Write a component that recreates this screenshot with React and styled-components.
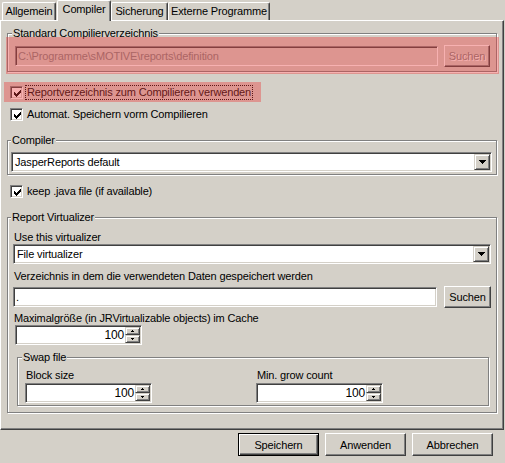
import React from "react";
import styled, { createGlobalStyle } from "styled-components";

const GlobalStyle = createGlobalStyle`
    body {
        margin: 0;
        background: #d4d0c8;
    }
`;

const tabs = [
    { label: "Allgemein", w: 54, ml: 0 },
    { label: "Compiler", w: 54, ml: 1, active: true },
    { label: "Sicherung", w: 57, ml: 0 },
    { label: "Externe Programme", w: 102, ml: 0 },
];

const Check = () => (
    <svg width="7" height="7" viewBox="0 0 7 7" shapeRendering="crispEdges">
        <path
            d="M0 2h1v3h-1z M1 3h1v3h-1z M2 4h1v3h-1z M3 3h1v3h-1z M4 2h1v3h-1z M5 1h1v3h-1z M6 0h1v3h-1z"
            fill="#000"
        />
    </svg>
);

const DownArrow = () => (
    <svg width="7" height="4" viewBox="0 0 7 4" shapeRendering="crispEdges">
        <path d="M0 0h7v1h-7z M1 1h5v1h-5z M2 2h3v1h-3z M3 3h1v1h-1z" fill="#000" />
    </svg>
);

const TinyArrow = ({ up }) => (
    <svg width="5" height="3" viewBox="0 0 5 3" shapeRendering="crispEdges">
        {up ? (
            <path d="M2 0h1v1h-1z M1 1h3v1h-3z" fill="#000" />
        ) : (
            <path d="M1 0h3v1h-3z M2 1h1v1h-1z" fill="#000" />
        )}
    </svg>
);

const CheckBox = ({ label, focused }) => (
    <CheckRow>
        {focused && <Highlight />}
        <Box>
            <Check />
        </Box>
        <CheckText $focused={focused}>{label}</CheckText>
    </CheckRow>
);

const Spinner = ({ value }) => (
    <SpinBox>
        <SpinValue>{value}</SpinValue>
        <SpinButtons>
            <SpinBtn>
                <TinyArrow up />
            </SpinBtn>
            <SpinBtn>
                <TinyArrow />
            </SpinBtn>
        </SpinButtons>
    </SpinBox>
);

const Combo = ({ value }) => (
    <ComboBox>
        <ComboText>{value}</ComboText>
        <DropButton>
            <DownArrow />
        </DropButton>
    </ComboBox>
);

export default function App() {
    return (
        <Window>
            <GlobalStyle />
            <TabStrip>
                {tabs.map(t => (
                    <Tab key={t.label} $w={t.w} $ml={t.ml} $active={t.active}>
                        {t.label}
                    </Tab>
                ))}
            </TabStrip>
            <Panel>
                <Group $mt={12} $pad="11px 6px 4px 7px">
                    <Legend $left={4}>Standard Compilierverzeichnis</Legend>
                    <FieldRow $gap={6}>
                        <Field $disabled>C:\Programme\sMOTIVE\reports\definition</Field>
                        <Button $w={46} $h={22} disabled>
                            Suchen
                        </Button>
                    </FieldRow>
                    <GroupHighlight />
                </Group>

                <CheckSpacer $mt={12} />
                <CheckBox label="Reportverzeichnis zum Compilieren verwenden" focused />
                <CheckSpacer $mt={5} />
                <CheckBox label="Automat. Speichern vorm Compilieren" />

                <Group $mt={17} $pad="11px 4px 2px 3px">
                    <Legend $left={3}>Compiler</Legend>
                    <Combo value="JasperReports default" />
                </Group>

                <CheckSpacer $mt={8} />
                <CheckBox label="keep .java file (if available)" />

                <Group $mt={17} $pad="13px 5px 6px 5px">
                    <Legend $left={3}>Report Virtualizer</Legend>
                    <Label>Use this virtualizer</Label>
                    <Combo value="File virtualizer" />
                    <Label $mt={6}>Verzeichnis in dem die verwendeten Daten gespeichert werden</Label>
                    <FieldRow $gap={7} $mt={3}>
                        <Field>.</Field>
                        <Button $w={47} $h={22}>
                            Suchen
                        </Button>
                    </FieldRow>
                    <Label $mt={4}>Maximalgröße (in JRVirtualizable objects) im Cache</Label>
                    <SpinSlot $ml={2}>
                        <Spinner value="100" />
                    </SpinSlot>

                    <Group $mt={12} $mx="0 2px 0 4px" $pad="11px 0 2px 7px">
                        <Legend $left={4}>Swap file</Legend>
                        <SwapGrid>
                            <div>
                                <Label>Block size</Label>
                                <SpinSlot $mt={1}>
                                    <Spinner value="100" />
                                </SpinSlot>
                            </div>
                            <div>
                                <Label>Min. grow count</Label>
                                <SpinSlot $mt={1}>
                                    <Spinner value="100" />
                                </SpinSlot>
                            </div>
                        </SwapGrid>
                    </Group>
                </Group>
            </Panel>
            <ButtonBar>
                <Button $w={81} $h={23} $default>
                    Speichern
                </Button>
                <Button $w={81} $h={23}>
                    Anwenden
                </Button>
                <Button $w={81} $h={23}>
                    Abbrechen
                </Button>
            </ButtonBar>
        </Window>
    );
}

const Window = styled.div`
    width: 505px;
    height: 463px;
    overflow: hidden;
    background: #d4d0c8;
    color: #000;
    font-family: "Liberation Sans", Arial, sans-serif;
    font-size: 11px;
    letter-spacing: -0.15px;
    display: flex;
    flex-direction: column;
`;

const TabStrip = styled.div`
    height: 20px;
    padding-left: 2px;
    display: flex;
    align-items: flex-end;
    position: relative;
    z-index: 1;
`;

const Tab = styled.div`
    box-sizing: border-box;
    width: ${p => p.$w}px;
    margin-left: ${p => p.$ml}px;
    height: ${p => (p.$active ? 21 : 18)}px;
    margin-bottom: ${p => (p.$active ? -1 : 0)}px;
    padding-bottom: ${p => (p.$active ? 4 : 1)}px;
    display: flex;
    align-items: center;
    justify-content: center;
    white-space: nowrap;
    background: #d4d0c8;
    border-top: 1px solid #fff;
    border-left: 1px solid #fff;
    border-right: 1px solid #404040;
    border-radius: 2px 2px 0 0;
    box-shadow: inset -1px 0 0 #808080;
`;

const Panel = styled.div`
    box-sizing: border-box;
    width: 504px;
    height: 410px;
    padding: 0 6px 0 6px;
    border-top: 1px solid #fff;
    border-left: 1px solid #fff;
    border-right: 1px solid #404040;
    border-bottom: 1px solid #404040;
    box-shadow: inset -1px -1px 0 #808080;
    display: flex;
    flex-direction: column;
`;

const Group = styled.div`
    position: relative;
    margin: ${p => p.$mx || "0"};
    margin-top: ${p => p.$mt || 0}px;
    padding: ${p => p.$pad};
    border: 1px solid #808080;
    box-shadow: inset 1px 1px 0 #fff, 1px 1px 0 #fff;
    display: flex;
    flex-direction: column;
`;

const Legend = styled.span`
    position: absolute;
    top: -7px;
    left: ${p => p.$left}px;
    padding: 0 1px;
    line-height: 13px;
    background: #d4d0c8;
    white-space: nowrap;
`;

const GroupHighlight = styled.div`
    position: absolute;
    top: 3px;
    left: -2px;
    right: -3px;
    bottom: -3px;
    background: rgba(235, 60, 60, 0.4);
    pointer-events: none;
`;

const FieldRow = styled.div`
    display: flex;
    align-items: center;
    gap: ${p => p.$gap}px;
    margin-top: ${p => p.$mt || 0}px;
`;

const sunken = `
    box-sizing: border-box;
    border: 1px solid;
    border-color: #808080 #fff #fff #808080;
    box-shadow: inset 1px 1px 0 #404040, inset -1px -1px 0 #d4d0c8;
`;

const Field = styled.div`
    ${sunken}
    flex: 1;
    height: 20px;
    padding: 0 2px;
    line-height: 18px;
    white-space: nowrap;
    overflow: hidden;
    background: ${p => (p.$disabled ? "#d4d0c8" : "#fff")};
    color: ${p => (p.$disabled ? "#808080" : "#000")};
`;

const Button = styled.button`
    box-sizing: border-box;
    width: ${p => p.$w}px;
    height: ${p => p.$h}px;
    padding: 0;
    font: inherit;
    letter-spacing: inherit;
    color: #000;
    background: #d4d0c8;
    border: 1px solid;
    border-color: ${p => (p.$default ? "#000" : "#fff #404040 #404040 #fff")};
    box-shadow: ${p =>
        p.$default
            ? "inset 1px 1px 0 #fff, inset -1px -1px 0 #404040, inset -2px -2px 0 #808080"
            : "inset -1px -1px 0 #808080"};

    &:disabled {
        color: #808080;
        text-shadow: 1px 1px 0 #fff;
    }
`;

const CheckSpacer = styled.div`
    height: ${p => p.$mt}px;
    flex: none;
`;

const CheckRow = styled.div`
    position: relative;
    height: 17px;
    display: flex;
    align-items: center;
    padding-left: 3px;
`;

const Highlight = styled.div`
    position: absolute;
    top: -2px;
    left: -3px;
    width: 257px;
    height: 20px;
    background: rgba(235, 60, 60, 0.4);
    pointer-events: none;
`;

const Box = styled.div`
    ${sunken}
    width: 13px;
    height: 13px;
    background: #fff;
    display: flex;
    align-items: center;
    justify-content: center;
    padding: 1px 0 0 1px;
`;

const CheckText = styled.span`
    margin-left: 3px;
    padding: 0 1px;
    line-height: 13px;
    white-space: nowrap;
    outline: ${p => (p.$focused ? "1px dotted #000" : "none")};
`;

const ComboBox = styled.div`
    ${sunken}
    height: 20px;
    background: #fff;
    display: flex;
    align-items: center;
    padding: 0 1px 0 3px;
`;

const ComboText = styled.div`
    flex: 1;
    white-space: nowrap;
`;

const DropButton = styled.div`
    box-sizing: border-box;
    width: 16px;
    height: 16px;
    background: #d4d0c8;
    border: 1px solid;
    border-color: #d4d0c8 #404040 #404040 #d4d0c8;
    box-shadow: inset 1px 1px 0 #fff, inset -1px -1px 0 #808080;
    display: flex;
    align-items: center;
    justify-content: center;
`;

const Label = styled.div`
    line-height: 13px;
    margin-top: ${p => p.$mt || 0}px;
    padding-left: 1px;
    white-space: nowrap;
`;

const SpinSlot = styled.div`
    margin-top: ${p => p.$mt || 0}px;
    margin-left: ${p => p.$ml || 0}px;
`;

const SpinBox = styled.div`
    ${sunken}
    width: 127px;
    height: 20px;
    background: #fff;
    display: flex;
    align-items: center;
    padding: 1px 1px 1px 2px;
`;

const SpinValue = styled.div`
    flex: 1;
    text-align: right;
    padding-right: 1px;
    font-size: 12px;
`;

const SpinButtons = styled.div`
    width: 15px;
    height: 16px;
    display: flex;
    flex-direction: column;
`;

const SpinBtn = styled.div`
    box-sizing: border-box;
    flex: 1;
    background: #d4d0c8;
    border: 1px solid;
    border-color: #d4d0c8 #404040 #404040 #d4d0c8;
    box-shadow: inset 1px 1px 0 #fff, inset -1px -1px 0 #808080;
    display: flex;
    align-items: center;
    justify-content: center;
`;

const SwapGrid = styled.div`
    display: grid;
    grid-template-columns: 231px auto;
`;

const ButtonBar = styled.div`
    margin-top: 3px;
    padding-right: 12px;
    display: flex;
    justify-content: flex-end;
    gap: 6px;
`;
